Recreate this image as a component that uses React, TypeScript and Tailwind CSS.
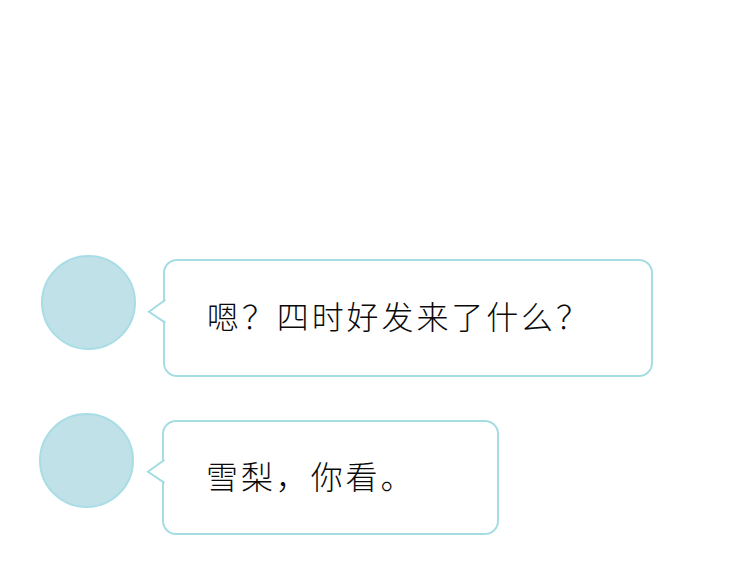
const messages = [
  { text: "嗯？四时好发来了什么？", avatarMl: "ml-[41px]", bubbleMl: "ml-[27px]", bubbleMt: "mt-[4px]", w: "w-[490px]", h: "h-[118px]" },
  { text: "雪梨，你看。", avatarMl: "ml-[39px]", bubbleMl: "ml-[28px]", bubbleMt: "mt-[7px]", w: "w-[337px]", h: "h-[115px]" },
];

function Tail() {
  return (
    <svg
      className="absolute left-[-18px] top-1/2 -translate-y-[64%]"
      width="20"
      height="30"
      viewBox="0 0 20 30"
    >
      <polygon points="20,1 2,13 20,24" fill="#ffffff" />
      <polyline
        points="18.5,1 2,13 18.5,24"
        fill="none"
        stroke="#a3dce3"
        strokeWidth="2"
        strokeLinejoin="miter"
      />
    </svg>
  );
}

export default function App() {
  return (
    <div className="w-[750px] h-[586px] bg-white pt-[255px] flex flex-col gap-[36px] font-['Noto_Sans_CJK_SC',sans-serif]">
      {messages.map((m, i) => (
        <div key={i} className="flex items-start">
          <div
            className={`${m.avatarMl} w-[95px] h-[95px] shrink-0 rounded-full bg-[#bfe1e7] border-2 border-[#a9dde6]`}
          />
          <div
            className={`relative ${m.bubbleMl} ${m.bubbleMt} ${m.w} ${m.h} rounded-[14px] border-2 border-[#a6dde3] bg-white flex items-center pl-[42px] pb-[6px]`}
          >
            <Tail />
            <span className="text-[32px] font-light text-[#0a0a0a] tracking-[2.9px] leading-none">
              {m.text}
            </span>
          </div>
        </div>
      ))}
    </div>
  );
}
